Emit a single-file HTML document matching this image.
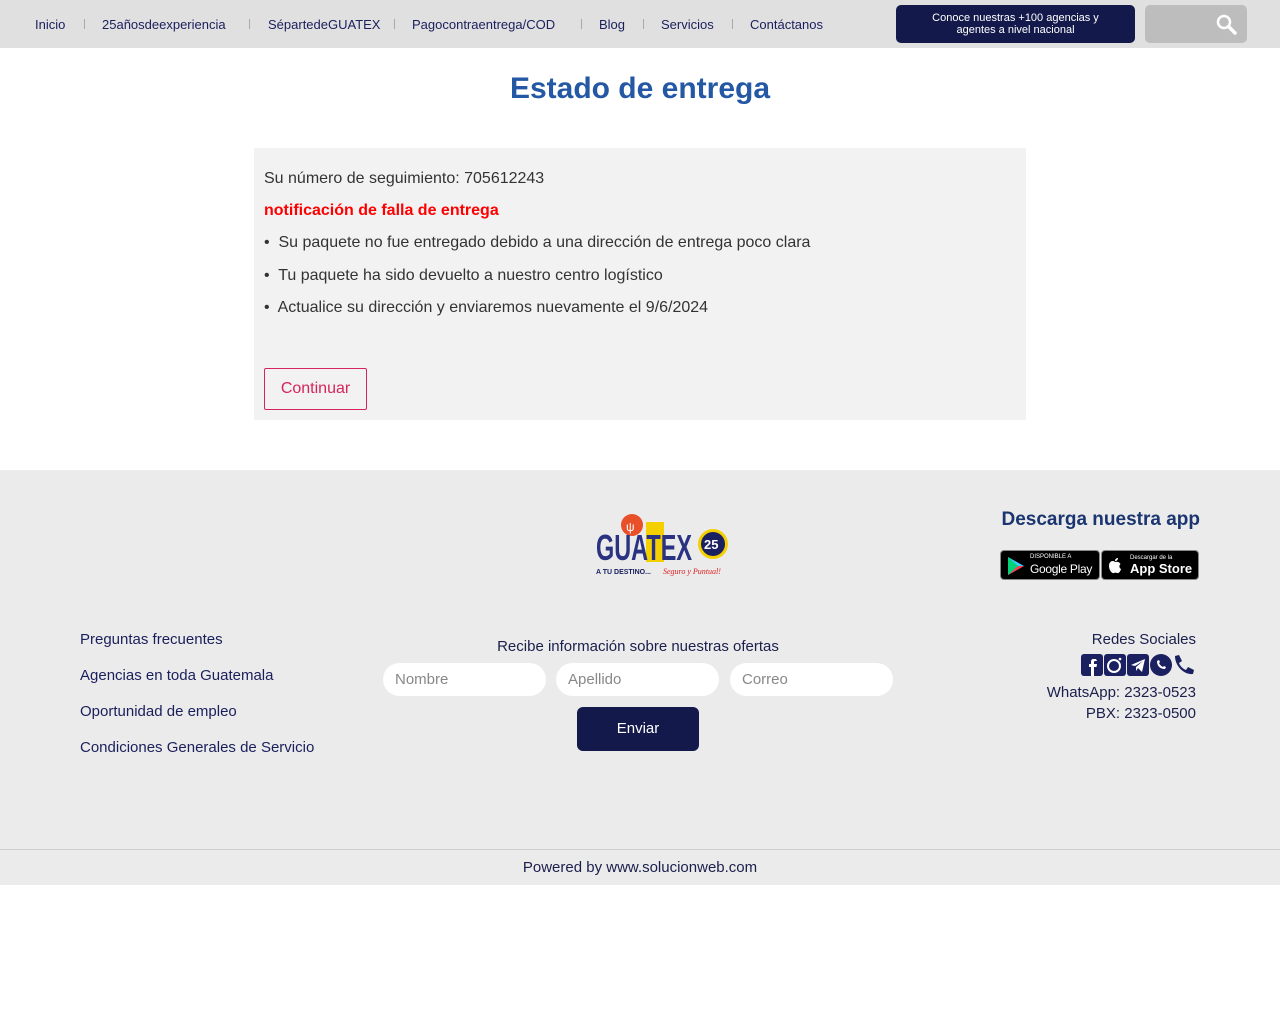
<!DOCTYPE html>
<html><head><meta charset="utf-8"><style>
*{box-sizing:border-box;margin:0;padding:0}
body{width:1280px;height:1024px;background:#fff;font-family:"Liberation Sans",sans-serif;color:#1a1f4b;position:relative;overflow:hidden}
.nav{height:48px;background:#e0e0e0;position:relative}
.nav span{position:absolute;top:17px;font-size:13px;color:#1a1f5b;white-space:nowrap}
.nav i{position:absolute;top:19px;width:1px;height:10px;background:#aaa}
.btn1{position:absolute;left:896px;top:5px;width:239px;height:38px;background:#131a4b;border-radius:5px;color:#fff;font-size:11px;text-align:center;line-height:12px;padding-top:7px}
.srch{position:absolute;left:1145px;top:5px;width:102px;height:38px;background:#bdbdbd;border-radius:5px}
h1{position:absolute;top:72px;width:100%;text-align:center;font-size:30px;color:#2457a4;font-weight:bold}
.box{position:absolute;left:254px;top:148px;width:772px;height:272px;background:#f2f2f2;font-size:16px;color:#333}
.box p{position:absolute;left:10px;white-space:nowrap}
.cont{position:absolute;left:10px;top:220px;width:103px;height:42px;border:1px solid #d6245c;color:#d6245c;font-size:16px;text-align:center;line-height:40px;border-radius:2px}
.foot{position:absolute;top:470px;left:0;width:1280px;height:380px;background:#ebebeb}
.bottom{position:absolute;top:849px;left:0;width:1280px;height:36px;background:#ebebeb;border-top:1px solid #ccc;text-align:center;font-size:15px;line-height:35px;color:#1a1f4b}
.fl{position:absolute;left:80px;font-size:15px;color:#1a1f5b}
.in{position:absolute;top:193px;width:163px;height:33px;background:#fff;border-radius:17px;font-size:15px;color:#888;padding:8px 12px}
.badge{position:absolute;top:80px;height:30px;background:#000;border:1px solid #888;border-radius:4px;color:#fff;white-space:nowrap}
</style></head><body>
<div class="nav">
<span style="left:35px">Inicio</span><i style="left:84px"></i>
<span style="left:102px">25añosdeexperiencia</span><i style="left:249px"></i>
<span style="left:268px">SépartedeGUATEX</span><i style="left:394px"></i>
<span style="left:412px">Pagocontraentrega/COD</span><i style="left:581px"></i>
<span style="left:599px">Blog</span><i style="left:643px"></i>
<span style="left:661px">Servicios</span><i style="left:732px"></i>
<span style="left:750px">Contáctanos</span>
<div class="btn1">Conoce nuestras +100 agencias y<br>agentes a nivel nacional</div>
<div class="srch"><svg width="102" height="38"><circle cx="79" cy="17" r="6" fill="none" stroke="#fff" stroke-width="2.5"/><line x1="84" y1="22" x2="90" y2="28" stroke="#fff" stroke-width="3.5" stroke-linecap="round"/></svg></div>
</div>
<h1>Estado de entrega</h1>
<div class="box">
<p style="top:22px">Su número de seguimiento: 705612243</p>
<p style="top:54px;color:#f00;font-weight:bold">notificación de falla de entrega</p>
<p style="top:86px">•&nbsp; Su paquete no fue entregado debido a una dirección de entrega poco clara</p>
<p style="top:119px">•&nbsp; Tu paquete ha sido devuelto a nuestro centro logístico</p>
<p style="top:151px">•&nbsp; Actualice su dirección y enviaremos nuevamente el 9/6/2024</p>
<div class="cont">Continuar</div>
</div>
<div class="foot">
<svg style="position:absolute;left:595px;top:42px" width="140" height="66">
<circle cx="37" cy="13" r="11" fill="#e8502a"/><text x="31" y="19" font-size="12" fill="#fff" font-family="Liberation Sans">ψ</text>
<rect x="51" y="10" width="18" height="40" fill="#f5d000"/>
<text x="1" y="48" font-size="36" font-weight="bold" fill="#2a3282" font-family="Liberation Sans Narrow,Liberation Sans" textLength="96" lengthAdjust="spacingAndGlyphs">GUATEX</text>
<circle cx="118" cy="32" r="15" fill="#f5d000"/><circle cx="118" cy="32" r="12" fill="#1a2060"/><text x="109" y="37" font-size="13" font-weight="bold" fill="#fff" font-family="Liberation Sans">25</text>
<text x="1" y="62" font-size="7" font-weight="bold" fill="#1a2060" font-family="Liberation Sans">A TU DESTINO...</text><text x="68" y="62" font-size="8" font-style="italic" fill="#e02020" font-family="Liberation Serif">Seguro y Puntual!</text>
</svg>
<div style="position:absolute;right:80px;top:39px;font-size:19px;color:#1a3570;font-weight:bold">Descarga nuestra app</div>
<div class="badge" style="left:1000px;width:100px"><svg style="position:absolute;left:6px;top:5px" width="18" height="20"><path d="M1 1L17 10L1 19Z" fill="#3bccff"/><path d="M1 1L11 10L1 19Z" fill="#00d27a"/><path d="M11 10L17 10L1 19Z" fill="#ff3a44"/></svg><span style="position:absolute;left:29px;top:3px;font-size:6px">DISPONIBLE A</span><span style="position:absolute;left:29px;top:11px;font-size:12px;letter-spacing:-0.3px">Google Play</span></div>
<div class="badge" style="left:1101px;width:98px"><svg style="position:absolute;left:5px;top:6px" width="16" height="18"><path d="M8 5C6 3 2 4 2 9C2 13 5 17 7 16C8 15.5 9 15.5 10 16C12 17 14 13 14 12C12 11 12 8 13.5 7C12 4.5 9.5 4.5 8 5ZM8 4C8 2 9.5 1 11 1C11 3 9.5 4 8 4Z" fill="#fff"/></svg><span style="position:absolute;left:28px;top:4px;font-size:6px">Descargar de la</span><span style="position:absolute;left:28px;top:10px;font-size:13px;font-weight:bold">App Store</span></div>
<div class="fl" style="top:161px">Preguntas frecuentes</div>
<div class="fl" style="top:197px">Agencias en toda Guatemala</div>
<div class="fl" style="top:233px">Oportunidad de empleo</div>
<div class="fl" style="top:269px">Condiciones Generales de Servicio</div>
<div style="position:absolute;left:383px;width:510px;top:168px;text-align:center;font-size:15px">Recibe información sobre nuestras ofertas</div>
<div class="in" style="left:383px">Nombre</div><div class="in" style="left:556px">Apellido</div><div class="in" style="left:730px">Correo</div>
<div style="position:absolute;left:577px;top:237px;width:122px;height:44px;background:#131a4b;border-radius:6px;color:#fff;text-align:center;line-height:44px;font-size:15px">Enviar</div>
<div style="position:absolute;right:84px;top:161px;font-size:15px;text-align:right">Redes Sociales</div>
<svg style="position:absolute;left:1081px;top:184px" width="116" height="24">
<rect x="0" y="0" width="22" height="22" rx="3" fill="#1a2060"/><path d="M15 5h-2.5c-1.5 0-2.5 1-2.5 2.5V10H8v3h2v9h3v-9h2.5l.5-3H13V8c0-.6.3-1 1-1h2z" fill="#fff"/>
<rect x="23" y="0" width="22" height="22" rx="3" fill="#1a2060"/><circle cx="33" cy="12" r="6" fill="none" stroke="#fff" stroke-width="2"/><circle cx="39" cy="5" r="1.3" fill="#fff"/>
<rect x="46" y="0" width="22" height="22" rx="3" fill="#1a2060"/><path d="M50 11L64 5L61 18L57 14L55 17L55 13L62 7L54 12Z" fill="#fff"/>
<circle cx="80" cy="11" r="11" fill="#1a2060"/><path d="M76 7c0 5 3 8 8 8l1-2-2-1-1 1c-2-1-3-2-4-4l1-1-1-2z" fill="#fff"/>
<path d="M94 2l4-1 3 6-3 2c1 3 4 6 7 7l2-3 6 3-1 4c-9 1-18-8-18-18z" fill="#1a2060"/>
</svg>
<div style="position:absolute;right:84px;top:214px;font-size:15px">WhatsApp: 2323-0523</div>
<div style="position:absolute;right:84px;top:235px;font-size:15px">PBX: 2323-0500</div>
</div>
<div class="bottom">Powered by www.solucionweb.com</div>
</body></html>
